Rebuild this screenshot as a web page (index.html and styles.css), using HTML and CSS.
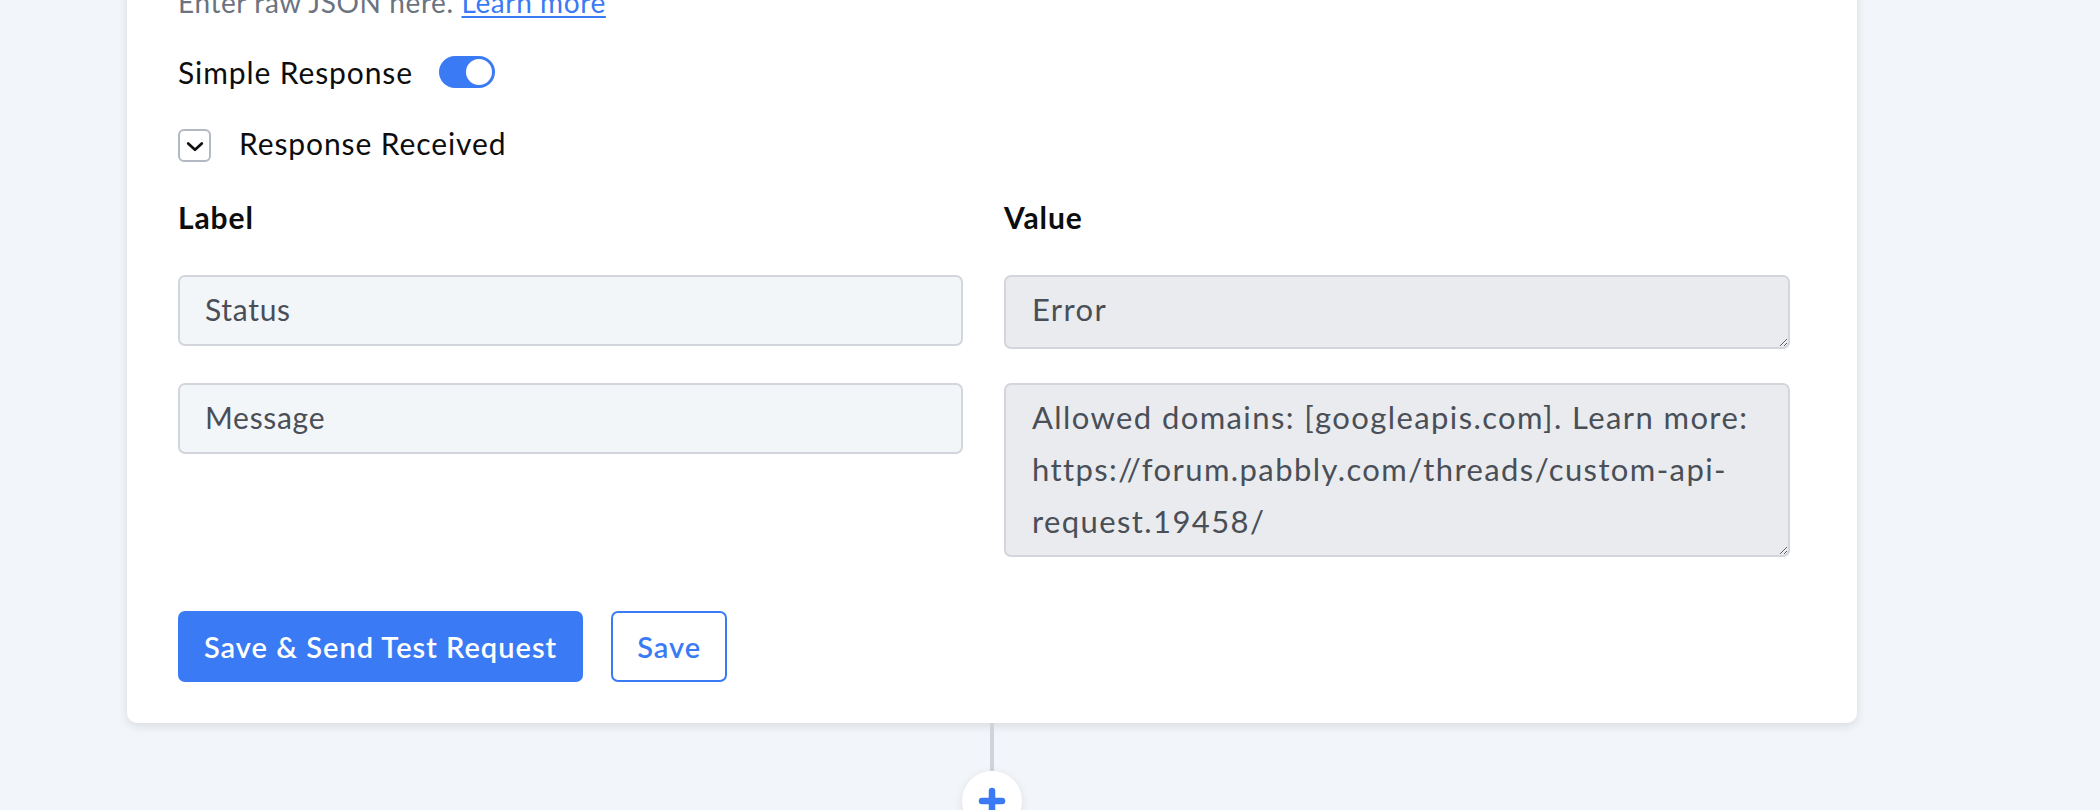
FILE: index.html
```html
<!DOCTYPE html>
<html lang="en">
<head>
<meta charset="utf-8">
<title>Custom API Request</title>
<link rel="stylesheet" href="styles.css">
</head>
<body>
<div class="canvas">
  <div class="card">
    <p class="hint">Enter raw JSON here. <a href="#" class="hint-link">Learn more</a></p>

    <div class="toggle-row">
      <span class="row-label">Simple Response</span>
      <span class="switch"><span class="knob"></span></span>
    </div>

    <div class="collapse-row">
      <span class="chev-box">
        <svg width="18" height="11" viewBox="0 0 18 11" aria-hidden="true">
          <path d="M2.2 2.4 L9 8.8 L15.8 2.4" fill="none" stroke="#111" stroke-width="2.7" stroke-linecap="round" stroke-linejoin="round"/>
        </svg>
      </span>
      <span class="row-label row-label-raised">Response Received</span>
    </div>

    <div class="kv">
      <div class="kv-head">Label</div>
      <div class="kv-head">Value</div>
      <input class="kv-input" type="text" value="Status" readonly>
      <textarea class="kv-area kv-area-one" readonly wrap="off">Error</textarea>
      <input class="kv-input" type="text" value="Message" readonly>
      <textarea class="kv-area kv-area-three" readonly wrap="off">Allowed domains: [googleapis.com]. Learn more:
https://forum.pabbly.com/threads/custom-api-
request.19458/</textarea>
    </div>

    <div class="actions">
      <button class="btn btn-primary" type="button">Save &amp; Send Test Request</button>
      <button class="btn btn-outline" type="button">Save</button>
    </div>
  </div>

  <div class="connector">
    <div class="connector-line"></div>
    <div class="add-step">
      <svg width="28" height="28" viewBox="0 0 28 28" aria-hidden="true">
        <path d="M14 4 V24 M4 14 H24" fill="none" stroke="#3a7bf5" stroke-width="6.5" stroke-linecap="round"/>
      </svg>
    </div>
  </div>
</div>
</body>
</html>
```

FILE: styles.css
```css
* {
  box-sizing: border-box;
}

html,
body {
  margin: 0;
  padding: 0;
}

body {
  background: #f2f5f9;
  font-family: "Lato", "Open Sans", sans-serif;
  color: #0d0d0d;
  overflow: hidden;
  height: 810px;
}

.canvas {
  width: 1730px;
  margin-left: 127px;
}

.card {
  margin-top: -18px;
  background: #ffffff;
  border-radius: 0 0 10px 10px;
  box-shadow: 0 3px 10px rgba(30, 40, 60, 0.12);
  padding: 0 67px 41px 51px;
}

.hint {
  margin: 0;
  font-size: 28px;
  line-height: 40px;
  letter-spacing: 0.6px;
  color: #6b7280;
}

.hint-link {
  color: #3a7bf5;
  text-decoration: underline;
  text-underline-offset: 3px;
}

.row-label {
  font-size: 30px;
  line-height: 40px;
  letter-spacing: 0.9px;
  color: #0d0d0d;
}

.row-label-raised {
  margin-bottom: 5px;
}

.toggle-row {
  margin-top: 34px;
  height: 32px;
  display: flex;
  align-items: center;
  gap: 26px;
}

.switch {
  width: 56px;
  height: 32px;
  border-radius: 16px;
  background: #3a7bf5;
  display: flex;
  align-items: center;
  justify-content: flex-end;
  padding-right: 3px;
}

.knob {
  width: 26px;
  height: 26px;
  border-radius: 50%;
  background: #ffffff;
}

.collapse-row {
  margin-top: 41px;
  height: 33px;
  display: flex;
  align-items: center;
  gap: 28px;
}

.chev-box {
  width: 33px;
  height: 33px;
  border: 2px solid #b3b9c2;
  border-radius: 6px;
  display: flex;
  align-items: center;
  justify-content: center;
  padding-top: 2px;
}

.kv {
  margin-top: 35px;
  display: grid;
  grid-template-columns: 785px 786px;
  column-gap: 41px;
  row-gap: 34px;
  align-items: start;
}

.kv-head {
  font-size: 30px;
  line-height: 40px;
  letter-spacing: 0.9px;
  font-weight: 700;
  color: #0d0d0d;
  margin-bottom: 4px;
}

.kv-input,
.kv-area {
  display: block;
  width: 100%;
  margin: 0;
  font-family: "Lato", "Open Sans", sans-serif;
  color: #4a4f57;
  border: 2px solid #d2d6dc;
  border-radius: 7px;
  outline: none;
}

.kv-input {
  height: 71px;
  padding: 0 25px 3px;
  font-size: 30px;
  letter-spacing: 0.7px;
  background: #f3f6f9;
}

.kv-area {
  padding: 6px 26px;
  font-size: 31px;
  line-height: 52px;
  letter-spacing: 1.4px;
  background: #e9ebef;
  resize: vertical;
  overflow: hidden;
}

.kv-area-one {
  height: 74px;
}

.kv-area-three {
  height: 174px;
}

.actions {
  margin-top: 54px;
  display: flex;
  gap: 28px;
}

.btn {
  height: 71px;
  font-family: "Lato", "Open Sans", sans-serif;
  font-size: 29px;
  font-weight: 600;
  letter-spacing: 1px;
  border-radius: 7px;
  cursor: pointer;
}

.btn-primary {
  background: #3a7bf5;
  color: #ffffff;
  border: 2px solid #3a7bf5;
  padding: 0 24px;
}

.btn-outline {
  background: #ffffff;
  color: #3a7bf5;
  border: 2px solid #3a7bf5;
  padding: 0 24px;
}

.connector {
  display: flex;
  flex-direction: column;
  align-items: center;
}

.connector-line {
  width: 4px;
  height: 48px;
  background: #d0d4da;
}

.add-step {
  width: 60px;
  height: 60px;
  border-radius: 50%;
  background: #ffffff;
  box-shadow: 0 2px 8px rgba(30, 40, 60, 0.1);
  display: flex;
  align-items: center;
  justify-content: center;
}
```
